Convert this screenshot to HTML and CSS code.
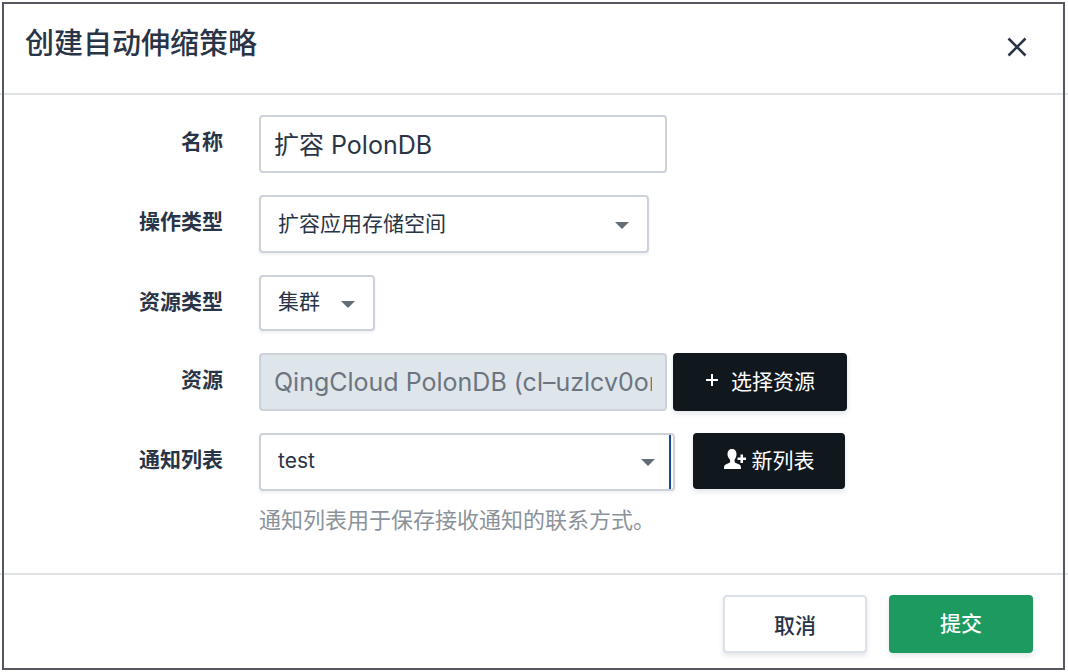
FILE: index.html
```html
<!DOCTYPE html>
<html lang="zh-CN">
  <head>
    <meta charset="UTF-8" />
    <meta name="viewport" content="width=device-width, initial-scale=1.0" />
    <title>创建自动伸缩策略</title>
    <link rel="stylesheet" href="styles.css">
  </head>
  <body>
    <form class="modal" role="dialog" aria-labelledby="modal-title">
      <header class="modal-header">
        <h1 id="modal-title">创建自动伸缩策略</h1>
        <button type="button" class="close" aria-label="关闭">
          <svg width="20" height="20" viewBox="0 0 20 20" fill="none" stroke="currentColor" stroke-width="2.500">
            <path d="M1.500 1.500l17 17M18.500 1.500l-17 17" />
          </svg>
        </button>
      </header>

      <div class="modal-body">
        <div class="field">
          <label for="name">名称</label>
          <input type="text" id="name" class="text-input" value="扩容 PolonDB" />
        </div>

        <div class="field">
          <label for="operation">操作类型</label>
          <div class="select select-operation">
            <select id="operation">
              <option>扩容应用存储空间</option>
            </select>
          </div>
        </div>

        <div class="field">
          <label for="resource-type">资源类型</label>
          <div class="select select-type">
            <select id="resource-type">
              <option>集群</option>
            </select>
          </div>
        </div>

        <div class="field">
          <label for="resource">资源</label>
          <input type="text" id="resource" class="text-input" value="QingCloud PolonDB (cl–uzlcv0or" disabled />
          <button type="button" class="btn btn-dark btn-resource">
            <svg width="14" height="14" viewBox="0 0 14 14" fill="none" stroke="currentColor" stroke-width="2">
              <path d="M7 1v12M1 7h12" />
            </svg>
            选择资源
          </button>
        </div>

        <div class="field">
          <label for="notify-list">通知列表</label>
          <div class="select select-notify">
            <select id="notify-list" aria-describedby="notify-hint">
              <option>test</option>
            </select>
          </div>
          <button type="button" class="btn btn-dark btn-list">
            <svg width="22" height="20" viewBox="0 0 22 20" fill="currentColor">
              <path d="M8 0c3.100 0 4.500 2 4.500 5 0 2.400-.8 4.300-1.900 5.700v1.900c0 .8.500 1.200 1.300 1.500l3.300 1.300c1.300.5 1.800 1.500 1.800 4.600H0c0-3.100.4-4.100 1.700-4.600l3.200-1.300c.8-.3 1.200-.7 1.200-1.500v-1.900C4.500 9.300 3.500 7.400 3.500 5c0-3 1.400-5 4.500-5z" />
              <path d="M16.500 5.500h2.500v3h3v2.500h-3v3h-2.500v-3h-3v-2.500h3z" />
            </svg>
            新列表
          </button>
        </div>

        <p id="notify-hint" class="hint">通知列表用于保存接收通知的联系方式。</p>
      </div>

      <footer class="modal-footer">
        <button type="button" class="btn btn-cancel">取消</button>
        <button type="submit" class="btn btn-submit">提交</button>
      </footer>
    </form>
  </body>
</html>
```
FILE: styles.css
```css
* {
  box-sizing: border-box;
}

body {
  margin: 0;
  background: #fff;
  color: #293446;
  font-family: Inter, "Noto Sans CJK SC", sans-serif;
  font-size: 21px;
}

button,
input,
select {
  font: inherit;
  color: inherit;
}

.modal {
  position: relative;
  padding: 2px 0;
}

/* frame lies over the dividers, which run to the window edge */
.modal::after {
  content: "";
  position: absolute;
  inset: 2px 3px 2px 2px;
  border: 2px solid #55565f;
  pointer-events: none;
}

.modal-header {
  display: flex;
  justify-content: space-between;
  align-items: flex-start;
  height: 93px;
  padding: 20px 34px 0 25px;
  border-bottom: 2px solid #dfe3e6;
}

.modal-header h1 {
  margin: 0;
  font-size: 29px;
  font-weight: 500;
  line-height: 44px;
}

.close {
  display: flex;
  margin-top: 8px;
  padding: 7px;
  border: none;
  background: none;
  cursor: pointer;
}

.modal-body {
  padding: 20px 24px 38px 0;
}

.field {
  display: flex;
  align-items: flex-start;
  margin-bottom: 22px;
}

.field label {
  width: 223px;
  margin-right: 36px;
  line-height: 54px;
  font-weight: 700;
  text-align: right;
}

.text-input {
  width: 408px;
  height: 58px;
  padding: 0 13px 2px;
  border: 2px solid #cdd2da;
  border-radius: 4px;
  background: #fff;
  font-size: 25px;
}

.text-input:disabled {
  padding-bottom: 0;
  background: #dee6eb;
  color: #6c757f;
}

.select {
  position: relative;
  height: 58px;
}

.select select {
  width: 100%;
  height: 100%;
  padding: 0 50px 2px 17px;
  border: 2px solid #cdd2da;
  border-radius: 4px;
  background: #fff;
  box-shadow: 0 2px 3px rgba(40, 60, 90, 0.08);
  appearance: none;
}

.select::after {
  content: "";
  position: absolute;
  top: 27px;
  right: 20px;
  border: 7px solid transparent;
  border-top-color: #646d76;
  border-bottom: none;
  pointer-events: none;
}

.select-operation {
  width: 390px;
}

.select-type {
  width: 116px;
  height: 56px;
}

.select-notify {
  width: 416px;
}

.select-type select,
.select-notify select {
  padding-bottom: 4px;
}

.select-type::after,
.select-notify::after {
  top: 26px;
}

.select-notify::before {
  content: "";
  position: absolute;
  top: 2px;
  bottom: 2px;
  right: 4px;
  width: 2px;
  background: #124a97;
}

.btn {
  display: flex;
  justify-content: center;
  align-items: center;
  height: 58px;
  padding: 0 0 4px;
  border: none;
  border-radius: 4px;
  box-shadow: 0 3px 5px rgba(40, 60, 90, 0.12);
  cursor: pointer;
}

.btn-dark {
  background: #10171d;
  color: #fff;
}

.btn-resource {
  width: 174px;
  gap: 12px;
  margin-left: 6px;
}

.btn-list {
  width: 152px;
  height: 56px;
  gap: 6px;
  margin-left: 18px;
}

.hint {
  margin: -8px 0 0 259px;
  color: #8b929a;
  font-size: 22px;
  line-height: 30px;
}

.modal-footer {
  display: flex;
  justify-content: flex-end;
  gap: 22px;
  padding: 20px 35px 17px;
  border-top: 2px solid #dfe3e6;
}

.btn-cancel,
.btn-submit {
  width: 144px;
  font-weight: 500;
}

.btn-cancel {
  padding: 0;
  border: 2px solid #dce1e7;
  background: #fff;
}

.btn-submit {
  background: #1c9a60;
  color: #fff;
}
```
